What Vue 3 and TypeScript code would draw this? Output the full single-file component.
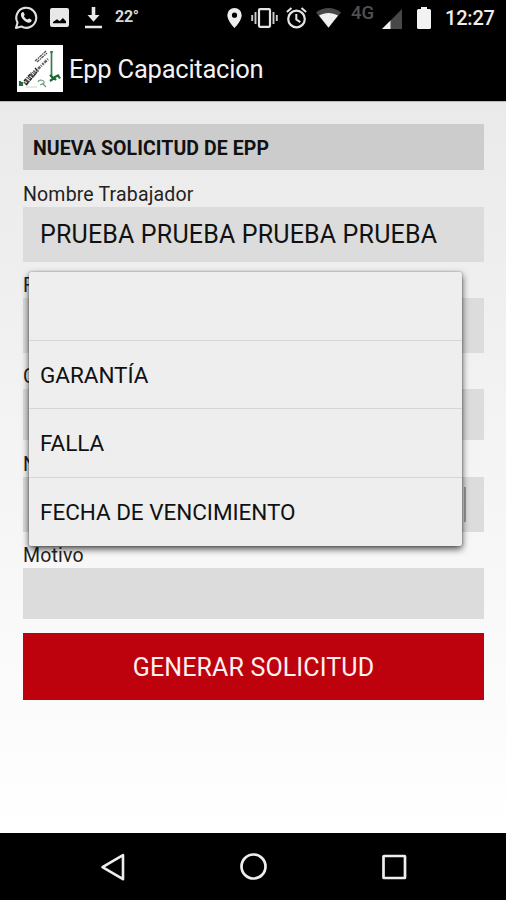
<script setup lang="ts">
interface Field {
  label: string
  value: string
  size: 'tall' | 'mid' | 'low'
  spinner?: boolean
}

const fields: Field[] = [
  { label: 'Nombre Trabajador', value: 'PRUEBA PRUEBA PRUEBA PRUEBA', size: 'tall' },
  { label: 'F', value: '', size: 'tall' },
  { label: 'C', value: '', size: 'mid' },
  { label: 'N', value: '', size: 'tall', spinner: true },
  { label: 'Motivo', value: '', size: 'low' },
]

const options: string[] = ['', 'GARANTÍA', 'FALLA', 'FECHA DE VENCIMIENTO']
</script>

<template>
  <div class="phone">
    <header class="status">
      <svg class="i-wa" viewBox="0 0 24 24" width="24" height="24">
        <path d="M2 22 3.5 16.6A10 10 0 1 1 7.4 20.5Z" fill="none" stroke="#e0e0e0" stroke-width="2.1" stroke-linejoin="round" />
        <path d="M8.200 6.300c.5-.5 1.300-.4 1.600.2l.9 2.200c.1.500-.9 1.200-.8 1.600.8 1.700 1.800 2.500 3.500 3.300.5.1 1.300-1.200 1.800-1l2.200 1.100c.5.300.1 1.900-.5 2.400-3.600 2.800-11-4-9.900-8 .1-.7.600-1.400 1.200-1.800z" fill="#e8e8e8" />
      </svg>
      <svg class="i-img" viewBox="0 0 19 19" width="19" height="19">
        <path fill-rule="evenodd" d="M2 0h15a2 2 0 0 1 2 2v15a2 2 0 0 1-2 2H2a2 2 0 0 1-2-2V2a2 2 0 0 1 2-2zM3 15.300h13v-2l-3.100-3.300-3.200 3.300-2.700-2L3 14z" fill="#e8e8e8" />
      </svg>
      <svg class="i-down" viewBox="0 0 17 23" width="17" height="23">
        <path d="M6.700 1h3.600v8H14.500l-6 6.800L2.500 9h4.200zM0 19.700h17v2.500H0z" fill="#e8e8e8" />
      </svg>
      <span class="temp">22°</span>
      <span class="grow"></span>
      <svg class="i-pin" viewBox="0 0 15 20" width="15" height="20">
        <path fill-rule="evenodd" d="M7.500 0A7.200 7.200 0 0 0 .3 7.200C.3 12.500 7.500 20 7.500 20s7.200-7.500 7.200-12.800A7.200 7.200 0 0 0 7.500 0zm0 4.600a2.600 2.600 0 1 1 0 5.200 2.600 2.600 0 0 1 0-5.200z" fill="#eee" />
      </svg>
      <svg class="i-vib" viewBox="0 0 27 20" width="27" height="20">
        <rect x="8" y="1.200" width="11" height="17.600" rx="1" fill="none" stroke="#e4e4e4" stroke-width="2.200" />
        <path d="M4.500 4v12M22.500 4v12M1.200 7v6M25.800 7v6" stroke="#ccc" stroke-width="1.900" />
      </svg>
      <svg class="i-alarm" viewBox="0 0 21 22" width="21" height="22">
        <circle cx="10.500" cy="12" r="8.300" fill="none" stroke="#e4e4e4" stroke-width="2.200" />
        <path d="M10.300 7v5.500l4 2.700M.9 5 5.500 1M20.100 5l-4.600-4" fill="none" stroke="#e4e4e4" stroke-width="2" />
      </svg>
      <svg class="i-wifi" viewBox="0 0 25 20" width="25" height="20">
        <path d="M0 4.500C7-1.500 18-1.500 25 4.500L12.500 20z" fill="#484848" />
        <path d="M3 7.500C9 4 16 4 22 7.500L12.500 19.500z" fill="#f0f0f0" />
      </svg>
      <span class="net">4G</span>
      <svg class="i-sig" viewBox="0 0 20 20" width="20" height="20">
        <path d="M20 0v20H0z" fill="#484848" />
        <path d="M8.500 11.500V20H0z" fill="#f0f0f0" />
      </svg>
      <svg class="i-bat" viewBox="0 0 14 22" width="14" height="22">
        <path d="M4 0h6v2h2.500A1.500 1.500 0 0 1 14 3.500v17a1.500 1.500 0 0 1-1.500 1.500h-11A1.500 1.500 0 0 1 0 20.500v-17A1.500 1.500 0 0 1 1.500 2H4z" fill="#f2f2f2" />
      </svg>
      <span class="clock">12:27</span>
    </header>

    <div class="appbar">
      <svg class="logo" viewBox="0 0 46 47" width="46" height="47">
        <rect width="46" height="47" fill="#fff" />
        <g fill="none">
          <path d="M8 39 19 26" stroke="#555" stroke-width="4.500" stroke-dasharray="1.500 .8 2.500 1 1 .6" />
          <path d="m19 26 12-12" stroke="#666" stroke-width="2.500" stroke-dasharray="2 1 3 1 1 1" />
          <path d="M9 40 20 27M18 23l4 4M7 36l8-9" stroke="#222" stroke-width="1.300" stroke-dasharray="3 1 1 1" />
          <path d="M18 16 29 6M20 17 30 8" stroke="#555" stroke-width="1.300" stroke-dasharray="3 .8 1.500 .7" />
          <path d="M34.500 6v26M33 7h3" stroke="#3b7a50" stroke-width="1.700" />
          <path d="M3 36v5M5 37v4" stroke="#23713b" stroke-width="2.200" />
          <path d="m33 30 3 3 5-2.500 2 3M33 36l4-3 2 2" stroke="#176a31" stroke-width="2.200" />
          <path d="M9 42h11" stroke="#c5d6ca" stroke-width="1" />
          <path d="M21 37c1-3 7-2 6 1l-4 2m3-1 3 3" stroke="#6b9a79" stroke-width="1.200" />
        </g>
      </svg>
      <h1 class="title">Epp Capacitacion</h1>
    </div>

    <main class="content">
      <h2 class="section">NUEVA SOLICITUD DE EPP</h2>
      <div v-for="field in fields" :key="field.label" class="field" :class="field.size">
        <label class="label">{{ field.label }}</label>
        <div class="box">
          <span>{{ field.value }}</span>
          <i v-if="field.spinner" class="caret"></i>
        </div>
      </div>
      <button class="submit" type="button">GENERAR SOLICITUD</button>
      <ul class="popup">
        <li v-for="option in options" :key="option" class="option"><span>{{ option }}</span></li>
      </ul>
    </main>

    <nav class="nav">
      <svg viewBox="0 0 28 30" width="28" height="30">
        <path d="M24 3.200v24L3.500 15.200z" fill="none" stroke="#eee" stroke-width="2.600" stroke-linejoin="round" />
      </svg>
      <svg viewBox="0 0 28 30" width="28" height="30">
        <circle cx="13.500" cy="14.500" r="12" fill="none" stroke="#eee" stroke-width="2.700" />
      </svg>
      <svg viewBox="0 0 28 30" width="28" height="30">
        <rect x="3.500" y="4" width="21.500" height="22" rx=".5" fill="none" stroke="#eee" stroke-width="2.700" />
      </svg>
    </nav>
  </div>
</template>

<style>
body {
  margin: 0;
}
</style>

<style scoped>
.phone {
  width: 506px;
  height: 900px;
  display: flex;
  flex-direction: column;
  overflow: hidden;
  background: #000;
  font-family: Roboto, "Liberation Sans", sans-serif;
  color: #111;
}
svg {
  display: block;
  flex: none;
}
.status {
  height: 35px;
  display: flex;
  align-items: center;
  padding: 0 11px 0 14px;
  box-sizing: border-box;
  color: #eee;
  white-space: nowrap;
}
.i-img { margin-left: 12px; }
.i-down { margin-left: 16px; }
.temp {
  margin: -2px 0 0 13px;
  font-size: 16px;
  font-weight: 700;
  letter-spacing: -0.3px;
  color: #d8d8d8;
}
.grow { flex: 1; }
.i-vib { margin-left: 9px; }
.i-alarm { margin-left: 8px; }
.i-wifi { margin-left: 9px; }
.net {
  margin: -9px 0 0 10px;
  width: 24px;
  font-size: 18.5px;
  font-weight: 500;
  color: #505050;
}
.i-sig { margin: 2px 0 0 7px; }
.i-bat { margin-left: 15px; }
.clock {
  margin-left: 14px;
  width: 50px;
  font-size: 20px;
  font-weight: 500;
  letter-spacing: -0.2px;
}
.appbar {
  height: 66px;
  display: flex;
  align-items: center;
  padding-left: 17px;
  box-sizing: border-box;
}
.title {
  margin: 2px 0 0 6px;
  font-size: 25.5px;
  font-weight: 400;
  letter-spacing: -0.23px;
  color: #f3f3f3;
  white-space: nowrap;
}
.content {
  position: relative;
  height: 732px;
  flex: none;
  box-sizing: border-box;
  padding: 22px 22px 0 23px;
  border-top: 1px solid #bbb;
  background: linear-gradient(#eaeaea, #fff);
}
.section {
  margin: 0 0 9px;
  height: 45.5px;
  line-height: 49px;
  padding-left: 10px;
  font-size: 19.5px;
  font-weight: 700;
  letter-spacing: 0.07px;
  background: #ccc;
  white-space: nowrap;
}
.label {
  display: block;
  height: 28px;
  line-height: 31px;
  font-size: 19.5px;
  letter-spacing: 0.17px;
  color: #222;
}
.box {
  display: flex;
  align-items: center;
  justify-content: space-between;
  box-sizing: border-box;
  padding: 0 18px 0 17px;
  background: #dcdcdc;
  font-size: 25px;
  letter-spacing: 0.17px;
  white-space: nowrap;
}
.tall .box { height: 55px; }
.mid .box { height: 51px; }
.low .box { height: 51px; }
.tall { margin-bottom: 8.3px; }
.mid { margin-bottom: 8.5px; }
.low { margin-bottom: 14px; }
.caret {
  width: 2px;
  height: 35px;
  background: #999;
}
.submit {
  display: block;
  width: 100%;
  height: 67px;
  padding: 3px 0 0;
  border: 0;
  background: #bd020e;
  color: #fff0f0;
  font-family: inherit;
  font-size: 25px;
  letter-spacing: 0.14px;
}
.popup {
  position: absolute;
  left: 28.5px;
  top: 170px;
  width: 433px;
  margin: 0;
  padding: 0;
  list-style: none;
  border-radius: 2px;
  background: #eee;
  box-shadow: 0 3px 7px rgba(0, 0, 0, 0.7), 0 0 2px rgba(0, 0, 0, 0.35);
}
.option {
  box-sizing: border-box;
  height: 68.5px;
  display: flex;
  align-items: center;
  padding: 1px 0 0 11.5px;
  font-size: 22.5px;
  letter-spacing: -0.04px;
  border-bottom: 1px solid #d6d6d6;
}
.option:last-child { border-bottom: 0; }
.nav {
  height: 67px;
  flex: none;
  display: flex;
  justify-content: space-between;
  align-items: center;
  padding: 0 98px 0 99px;
}
</style>
